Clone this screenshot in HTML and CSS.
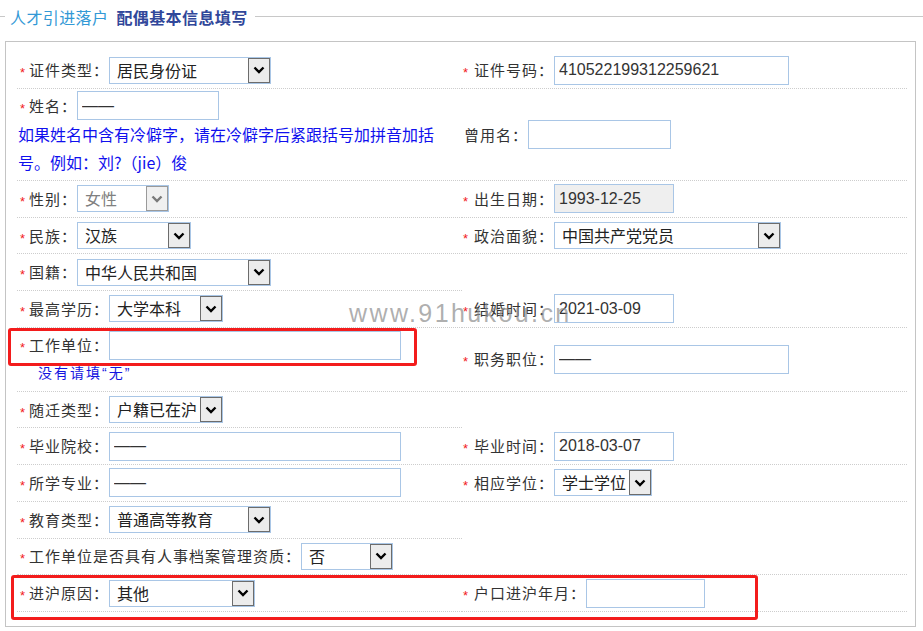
FILE: index.html
```html
<!DOCTYPE html>
<html lang="zh-CN">
<head>
<meta charset="utf-8">
<title>配偶基本信息填写</title>
<link rel="stylesheet" href="styles.css">
</head>
<body>
<div class="page">
  <div class="legend">
    <span class="rule rule-short"></span>
    <h2 class="legend-title"><span class="legend-a">人才引进落户</span><span class="legend-b">配偶基本信息填写</span></h2>
    <span class="rule rule-long"></span>
  </div>
  <div class="box">
    <div class="grid">
      <!-- row 1 -->
      <div class="cell">
        <span class="req">*</span><span class="label">证件类型：</span>
        <div class="select w162"><span class="sel-text">居民身份证</span><span class="sel-btn"><svg viewBox="0 0 12 8" width="12" height="8"><path d="M1.5 1.5 L6 6 L10.5 1.5" fill="none" stroke="#000" stroke-width="2.4"/></svg></span></div>
      </div>
      <div class="cell cell-r">
        <span class="req req-r">*</span><span class="label">证件号码：</span>
        <input class="input w235" type="text" value="410522199312259621">
      </div>
      <!-- row 2 -->
      <div class="cell cell-tall">
        <div class="field">
          <span class="req">*</span><span class="label">姓名：</span>
          <input class="input w142" type="text" value="——">
        </div>
        <p class="hint-blue">如果姓名中含有冷僻字，请在冷僻字后紧跟括号加拼音加括号。例如：刘?（jie）俊</p>
      </div>
      <div class="cell cell-r">
        <span class="label label-nostar">曾用名：</span>
        <input class="input w143" type="text" value="">
      </div>
      <!-- row 3 -->
      <div class="cell">
        <span class="req">*</span><span class="label">性别：</span>
        <div class="select select-disabled w92"><span class="sel-text">女性</span><span class="sel-btn"><svg viewBox="0 0 12 8" width="12" height="8"><path d="M1.5 1.5 L6 6 L10.5 1.5" fill="none" stroke="#7a7a7a" stroke-width="2.4"/></svg></span></div>
      </div>
      <div class="cell cell-r">
        <span class="req req-r">*</span><span class="label">出生日期：</span>
        <input class="input input-readonly w120" type="text" value="1993-12-25" readonly>
      </div>
      <!-- row 4 -->
      <div class="cell">
        <span class="req">*</span><span class="label">民族：</span>
        <div class="select w114"><span class="sel-text">汉族</span><span class="sel-btn"><svg viewBox="0 0 12 8" width="12" height="8"><path d="M1.5 1.5 L6 6 L10.5 1.5" fill="none" stroke="#000" stroke-width="2.4"/></svg></span></div>
      </div>
      <div class="cell cell-r">
        <span class="req req-r">*</span><span class="label">政治面貌：</span>
        <div class="select w227"><span class="sel-text">中国共产党党员</span><span class="sel-btn"><svg viewBox="0 0 12 8" width="12" height="8"><path d="M1.5 1.5 L6 6 L10.5 1.5" fill="none" stroke="#000" stroke-width="2.4"/></svg></span></div>
      </div>
      <!-- row 5 -->
      <div class="cell">
        <span class="req">*</span><span class="label">国籍：</span>
        <div class="select w194"><span class="sel-text">中华人民共和国</span><span class="sel-btn"><svg viewBox="0 0 12 8" width="12" height="8"><path d="M1.5 1.5 L6 6 L10.5 1.5" fill="none" stroke="#000" stroke-width="2.4"/></svg></span></div>
      </div>
      <div class="cell cell-r cell-blank"></div>
      <!-- row 6 -->
      <div class="cell">
        <span class="req">*</span><span class="label">最高学历：</span>
        <div class="select w114"><span class="sel-text">大学本科</span><span class="sel-btn"><svg viewBox="0 0 12 8" width="12" height="8"><path d="M1.5 1.5 L6 6 L10.5 1.5" fill="none" stroke="#000" stroke-width="2.4"/></svg></span></div>
      </div>
      <div class="cell cell-r">
        <span class="req req-r">*</span><span class="label">结婚时间：</span>
        <input class="input w120" type="text" value="2021-03-09">
      </div>
      <!-- row 7 -->
      <div class="cell cell-tall cell-work">
        <div class="field">
          <span class="req">*</span><span class="label">工作单位：</span>
          <input class="input w292" type="text" value="">
        </div>
        <p class="hint-small">没有请填“无”</p>
      </div>
      <div class="cell cell-r">
        <span class="req req-r">*</span><span class="label">职务职位：</span>
        <input class="input w235" type="text" value="——">
      </div>
      <!-- row 8 -->
      <div class="cell">
        <span class="req">*</span><span class="label">随迁类型：</span>
        <div class="select w114"><span class="sel-text">户籍已在沪</span><span class="sel-btn"><svg viewBox="0 0 12 8" width="12" height="8"><path d="M1.5 1.5 L6 6 L10.5 1.5" fill="none" stroke="#000" stroke-width="2.4"/></svg></span></div>
      </div>
      <div class="cell cell-r cell-blank"></div>
      <!-- row 9 -->
      <div class="cell">
        <span class="req">*</span><span class="label">毕业院校：</span>
        <input class="input w292" type="text" value="——">
      </div>
      <div class="cell cell-r">
        <span class="req req-r">*</span><span class="label">毕业时间：</span>
        <input class="input w120" type="text" value="2018-03-07">
      </div>
      <!-- row 10 -->
      <div class="cell">
        <span class="req">*</span><span class="label">所学专业：</span>
        <input class="input w292" type="text" value="——">
      </div>
      <div class="cell cell-r">
        <span class="req req-r">*</span><span class="label">相应学位：</span>
        <div class="select w98"><span class="sel-text">学士学位</span><span class="sel-btn"><svg viewBox="0 0 12 8" width="12" height="8"><path d="M1.5 1.5 L6 6 L10.5 1.5" fill="none" stroke="#000" stroke-width="2.4"/></svg></span></div>
      </div>
      <!-- row 11 -->
      <div class="cell">
        <span class="req">*</span><span class="label">教育类型：</span>
        <div class="select w162"><span class="sel-text">普通高等教育</span><span class="sel-btn"><svg viewBox="0 0 12 8" width="12" height="8"><path d="M1.5 1.5 L6 6 L10.5 1.5" fill="none" stroke="#000" stroke-width="2.4"/></svg></span></div>
      </div>
      <div class="cell cell-r cell-blank"></div>
      <!-- row 12 -->
      <div class="cell cell-full">
        <span class="req">*</span><span class="label">工作单位是否具有人事档案管理资质：</span>
        <div class="select w92"><span class="sel-text">否</span><span class="sel-btn"><svg viewBox="0 0 12 8" width="12" height="8"><path d="M1.5 1.5 L6 6 L10.5 1.5" fill="none" stroke="#000" stroke-width="2.4"/></svg></span></div>
      </div>
      <!-- row 13 -->
      <div class="cell">
        <span class="req">*</span><span class="label">进沪原因：</span>
        <div class="select w146"><span class="sel-text">其他</span><span class="sel-btn"><svg viewBox="0 0 12 8" width="12" height="8"><path d="M1.5 1.5 L6 6 L10.5 1.5" fill="none" stroke="#000" stroke-width="2.4"/></svg></span></div>
      </div>
      <div class="cell cell-r">
        <span class="req req-r">*</span><span class="label">户口进沪年月：</span>
        <input class="input w119" type="text" value="">
      </div>
    </div>
  </div>

  <div class="watermark">www.91hukou.cn</div>
  <div class="mark mark-work"></div>
  <div class="mark mark-reason"></div>
</div>
</body>
</html>
```

FILE: styles.css
```css
* { box-sizing: border-box; }

body {
  margin: 0;
  background: #fff;
  font-family: "Noto Sans CJK SC", "Liberation Sans", sans-serif;
  color: #333;
}

.page {
  position: relative;
  width: 923px;
  height: 631px;
  overflow: hidden;
}

/* legend header */
.legend {
  display: flex;
  align-items: center;
  height: 33px;
}
.rule {
  height: 0;
  border-top: 1px solid #c8c8c8;
}
.rule-short { width: 5px; }
.rule-long { flex: 1; }
.legend-title {
  margin: 0;
  padding: 0 7px 0 5px;
  font-size: 16px;
  font-weight: normal;
  letter-spacing: 0.4px;
  line-height: 20px;
  white-space: nowrap;
}
.legend-a { color: #3399d6; }
.legend-b { color: #30479a; font-weight: bold; margin-left: 8px; }

/* form box */
.box {
  margin: 8px 0 0 5px;
  width: 911px;
  height: 586px;
  border: 1px solid #c4c4c4;
  padding: 10px 8px 0 11px;
}
.grid {
  display: grid;
  grid-template-columns: 445px 445px;
  grid-template-rows: 37px 92px 36.7px 36.7px 36.7px 36.7px 64px 36.7px 36.7px 36.7px 36.7px 36.7px 36.7px;
}
.cell {
  display: flex;
  align-items: center;
  border-bottom: 1px dotted #cdcdcd;
  padding-left: 1px;
}
.cell-blank { border-bottom-color: transparent; }
.cell-full { grid-column: 1 / 3; }
.cell-tall {
  flex-direction: column;
  align-items: flex-start;
  justify-content: flex-start;
  padding-top: 2px;
}
.cell-work { padding-top: 3px; }
.field {
  display: flex;
  align-items: center;
}

.req {
  flex: none;
  width: 9px;
  margin-left: 2px;
  height: 20px;
  padding-top: 6px;
  font: 13px/14px "Liberation Sans", sans-serif;
  color: #f21b1b;
}
.req-r { width: 11px; margin-left: 0; }

.label {
  flex: none;
  font-size: 15px;
  letter-spacing: 1px;
  line-height: 20px;
  white-space: nowrap;
  color: #333;
}
.label-nostar { margin-left: 1px; }

.hint-blue {
  margin: 0;
  width: 420px;
  font-size: 16px;
  line-height: 28px;
  color: #1010ee;
}
.hint-small {
  margin: 0 0 0 20px;
  font-family: "Liberation Sans", "Noto Sans CJK SC", sans-serif;
  font-size: 14px;
  letter-spacing: 2px;
  line-height: 26px;
  color: #1414e0;
}

/* controls */
.input {
  flex: none;
  height: 29px;
  margin: 0;
  border: 1px solid #a9c6e6;
  padding: 0 4px;
  font: 16px "Liberation Sans", "Noto Sans CJK SC", sans-serif;
  color: #333;
  background: #fff;
  outline: none;
}
.input-readonly { background: #efefef; }

.select {
  flex: none;
  display: flex;
  height: 27px;
  border: 1px solid #a9c6e6;
  background: #fff;
  overflow: hidden;
}
.sel-text {
  flex: 1;
  min-width: 0;
  padding-left: 7px;
  font-size: 16px;
  line-height: 25px;
  white-space: nowrap;
  overflow: hidden;
  color: #222;
}
.sel-btn {
  flex: none;
  width: 22px;
  background: #ececec;
  border: 1px solid #6c6c6c;
  display: flex;
  align-items: center;
  justify-content: center;
}
.select-disabled .sel-text { color: #808080; }
.select-disabled .sel-btn { border-color: #9a9a9a; background: #f0f0f0; }

.w92 { width: 92px; }
.w98 { width: 98px; }
.w114 { width: 114px; }
.w119 { width: 119px; }
.w120 { width: 120px; }
.w142 { width: 142px; }
.w143 { width: 143px; }
.w146 { width: 146px; }
.w162 { width: 162px; }
.w194 { width: 194px; }
.w227 { width: 227px; }
.w235 { width: 235px; }
.w292 { width: 292px; }

/* overlays */
.watermark {
  position: absolute;
  left: 349px;
  top: 296px;
  font: 25px/34px "Liberation Sans", sans-serif;
  letter-spacing: 2.4px;
  color: rgba(140, 140, 140, 0.7);
  pointer-events: none;
}
.mark {
  position: absolute;
  border: 3px solid #f31c1c;
  border-radius: 3px;
}
.mark-work { left: 8px; top: 328px; width: 409px; height: 38px; }
.mark-reason { left: 11px; top: 575px; width: 747px; height: 45px; }
```
